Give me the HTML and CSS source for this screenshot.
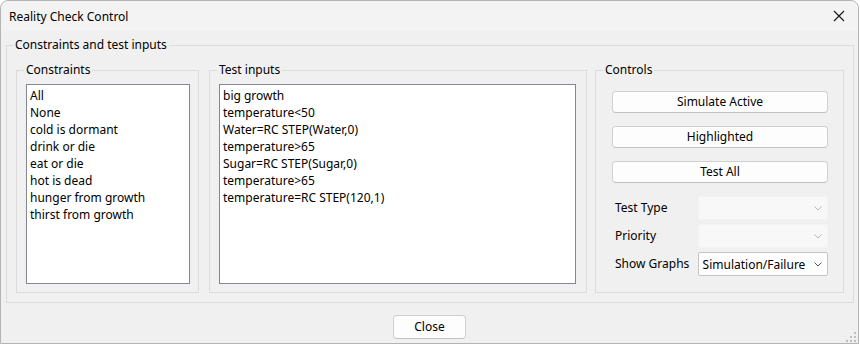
FILE: index.html
```html
<!DOCTYPE html>
<html>
<head>
<meta charset="utf-8">
<link rel="stylesheet" href="styles.css">
</head>
<body>
<div class="window">
  <div class="titlebar">
    <span class="title">Reality Check Control</span>
    <svg class="close-x" width="12" height="12" viewBox="0 0 12 12"><path d="M1 1L11 11M11 1L1 11" stroke="#1a1a1a" stroke-width="1.2" fill="none"/></svg>
  </div>
  <div class="client">
    <div class="group outer">
      <div class="group-title outer-title">Constraints and test inputs</div>
      <div class="columns">
        <div class="group col-constraints">
          <div class="group-title">Constraints</div>
          <div class="listbox list-constraints">
            <div>All</div>
            <div>None</div>
            <div>cold is dormant</div>
            <div>drink or die</div>
            <div>eat or die</div>
            <div>hot is dead</div>
            <div>hunger from growth</div>
            <div>thirst from growth</div>
          </div>
        </div>
        <div class="group col-inputs">
          <div class="group-title">Test inputs</div>
          <div class="listbox list-inputs">
            <div>big growth</div>
            <div>temperature&lt;50</div>
            <div>Water=RC STEP(Water,0)</div>
            <div>temperature&gt;65</div>
            <div>Sugar=RC STEP(Sugar,0)</div>
            <div>temperature&gt;65</div>
            <div>temperature=RC STEP(120,1)</div>
          </div>
        </div>
        <div class="group col-controls">
          <div class="group-title">Controls</div>
          <div class="buttons">
            <div class="btn">Simulate Active</div>
            <div class="btn">Highlighted</div>
            <div class="btn">Test All</div>
          </div>
          <div class="form">
            <div class="row">
              <span class="label">Test Type</span>
              <div class="combo disabled"><span></span><svg class="chev" width="8" height="5" viewBox="0 0 8 5"><path d="M0.5 0.5L4 4L7.5 0.5" stroke="#b8b8b8" fill="none"/></svg></div>
            </div>
            <div class="row">
              <span class="label">Priority</span>
              <div class="combo disabled"><span></span><svg class="chev" width="8" height="5" viewBox="0 0 8 5"><path d="M0.5 0.5L4 4L7.5 0.5" stroke="#b8b8b8" fill="none"/></svg></div>
            </div>
            <div class="row">
              <span class="label">Show Graphs</span>
              <div class="combo active"><span>Simulation/Failure</span><svg class="chev" width="8" height="5" viewBox="0 0 8 5"><path d="M0.5 0.5L4 4L7.5 0.5" stroke="#555" fill="none"/></svg></div>
            </div>
          </div>
        </div>
      </div>
    </div>
    <div class="footer">
      <div class="btn close-btn">Close</div>
    </div>
    <svg class="grip" width="10" height="10" viewBox="0 0 10 10">
      <rect x="8" y="0" width="2" height="2" fill="#bdbdbd"/>
      <rect x="4" y="4" width="2" height="2" fill="#bdbdbd"/>
      <rect x="8" y="4" width="2" height="2" fill="#bdbdbd"/>
      <rect x="0" y="8" width="2" height="2" fill="#bdbdbd"/>
      <rect x="4" y="8" width="2" height="2" fill="#bdbdbd"/>
      <rect x="8" y="8" width="2" height="2" fill="#bdbdbd"/>
    </svg>
  </div>
</div>
</body>
</html>
```
FILE: styles.css
```css
html, body {
  margin: 0;
  padding: 0;
  background: #ffffff;
}
body {
  font-family: "Noto Sans", "Open Sans", sans-serif;
  font-size: 12px;
  color: #000;
}
.window {
  box-sizing: border-box;
  width: 859px;
  height: 344px;
  border: 1px solid #b4b4b4;
  border-radius: 8px 8px 0 0;
  background: #f0f0f0;
  display: flex;
  flex-direction: column;
  overflow: hidden;
}
.titlebar {
  height: 30px;
  flex: none;
  background: #f3f3f3;
  display: flex;
  align-items: center;
  justify-content: space-between;
  padding: 0 8px 0 8px;
  border-radius: 7px 7px 0 0;
}
.title {
  line-height: 16px;
  padding-top: 1px;
}
.close-x {
  margin-right: 5px;
}
.client {
  flex: 1;
  position: relative;
  display: flex;
  flex-direction: column;
}
.group {
  border: 1px solid #dcdcdc;
  box-sizing: border-box;
}
.group-title {
  width: max-content;
  line-height: 16px;
  margin-top: -9px;
  padding: 0 2px;
  background: #f0f0f0;
}
.outer {
  margin: 14px 4px 0 5px;
  padding: 0 9px 9px 9px;
}
.outer-title {
  margin-left: -3px;
}
.columns {
  display: flex;
  margin-top: 17px;
}
.col-constraints,
.col-inputs,
.col-controls {
  height: 223px;
}
.col-constraints {
  width: 183px;
  margin-right: 10px;
  padding: 0 8px 0 9px;
}
.col-inputs {
  width: 378px;
  margin-right: 8px;
  padding: 0 10px 0 9px;
}
.col-controls {
  width: 249px;
  padding: 0 15px 0 16px;
}
.col-constraints .group-title,
.col-inputs .group-title {
  margin-left: -2px;
}
.col-controls .group-title {
  margin-left: -9px;
}
.listbox {
  margin-top: 6px;
  height: 200px;
  box-sizing: border-box;
  background: #fff;
  border: 1px solid #828790;
  padding: 2px 3px 0 3px;
  line-height: 17px;
  white-space: nowrap;
}
.buttons {
  margin-top: 13px;
  display: flex;
  flex-direction: column;
  gap: 13px;
}
.btn {
  box-sizing: border-box;
  height: 22px;
  background: #fdfdfd;
  border: 1px solid #d0d0d0;
  border-bottom-color: #c2c2c2;
  border-radius: 4px;
  display: flex;
  align-items: center;
  justify-content: center;
  line-height: 16px;
}
.form {
  margin-top: 13px;
  display: flex;
  flex-direction: column;
  gap: 4px;
}
.row {
  display: flex;
  align-items: center;
  height: 24px;
}
.label {
  width: 86px;
  padding-left: 3px;
  box-sizing: border-box;
  line-height: 16px;
}
.combo {
  box-sizing: border-box;
  width: 131px;
  height: 24px;
  display: flex;
  align-items: center;
  justify-content: space-between;
  padding: 0 5px 0 4px;
  border-radius: 2px;
}
.combo.disabled {
  background: #f8f8f8;
  border: 1px solid #f3f3f3;
}
.combo.active {
  background: #fff;
  border: 1px solid #c6c6c6;
}
.footer {
  display: flex;
  justify-content: center;
  margin-top: 12px;
}
.close-btn {
  width: 73px;
  height: 24px;
}
.grip {
  position: absolute;
  right: 2px;
  bottom: 1px;
}
```
